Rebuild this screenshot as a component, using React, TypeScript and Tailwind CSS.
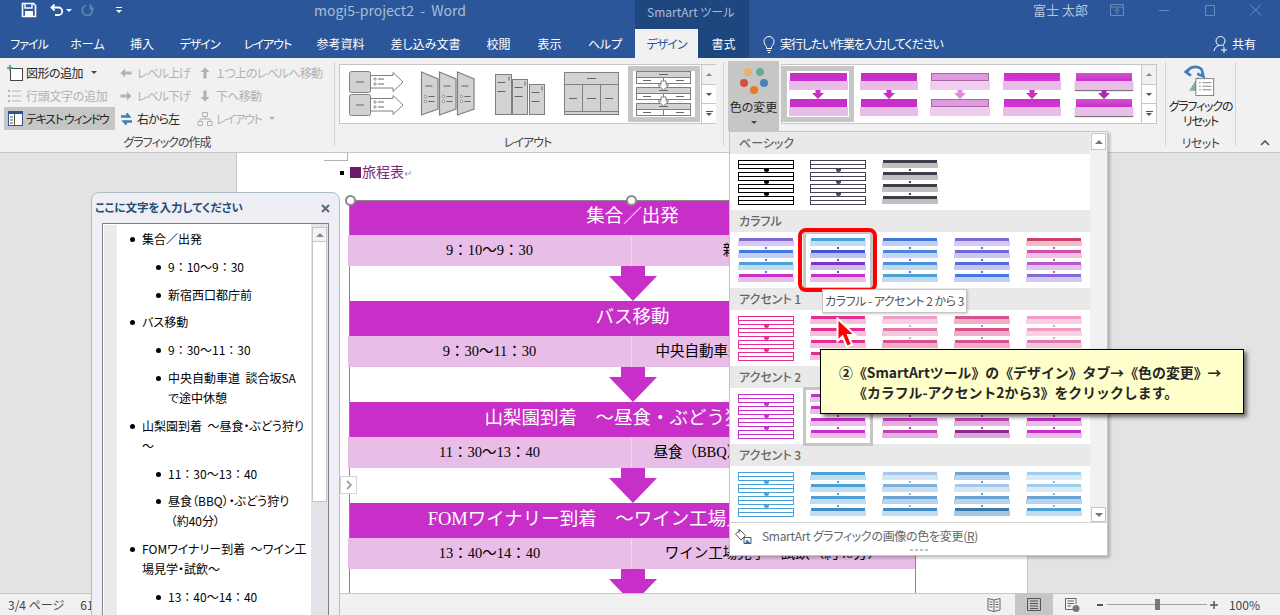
import React from "react";

type Pair = { b: string; s: string };
const purple: Pair = { b: "bg-[#8469d6]", s: "bg-[#d3c9f2]" };
const blue: Pair = { b: "bg-[#4476e0]", s: "bg-[#c2cff4]" };
const sky: Pair = { b: "bg-[#4ba0da]", s: "bg-[#bfdcf0]" };
const mag: Pair = { b: "bg-[#c82ec8]", s: "bg-[#e8bde8]" };
const indigo: Pair = { b: "bg-[#4455d8]", s: "bg-[#bcc2ef]" };
const violet: Pair = { b: "bg-[#7b35cc]", s: "bg-[#cfbce9]" };
const crimson: Pair = { b: "bg-[#d0406e]", s: "bg-[#eebccb]" };
const rose: Pair = { b: "bg-[#d050b0]", s: "bg-[#efc0e2]" };
const orchid: Pair = { b: "bg-[#b858d0]", s: "bg-[#e2c3ee]" };
const mid1: Pair = { b: "bg-[#4a86e0]", s: "bg-[#c3d6f3]" };
const mid2: Pair = { b: "bg-[#4a90dc]", s: "bg-[#bfd8f2]" };
const per1: Pair = { b: "bg-[#6d67dc]", s: "bg-[#c9c7f2]" };
const per2: Pair = { b: "bg-[#5a6ae0]", s: "bg-[#c3c8f3]" };
const dark: Pair = { b: "bg-[#3e3e4a]", s: "bg-[#c0c0c0]" };
const pk: Pair = { b: "bg-[#e32d91]", s: "bg-[#f5c0dc]" };
const pk1: Pair = { b: "bg-[#ee9cc4]", s: "bg-[#f6d0e4]" };
const pk2: Pair = { b: "bg-[#e478ac]", s: "bg-[#f4c8dc]" };
const pk3: Pair = { b: "bg-[#d85090]", s: "bg-[#f0aec8]" };
const pk4: Pair = { b: "bg-[#f39ac6]", s: "bg-[#f9d0e4]" };
const mg1: Pair = { b: "bg-[#dd88dd]", s: "bg-[#f0d0f0]" };
const mg2: Pair = { b: "bg-[#c040b8]", s: "bg-[#e4b0e0]" };
const mg3: Pair = { b: "bg-[#8a2a8a]", s: "bg-[#d8a8d8]" };
const sk1: Pair = { b: "bg-[#a5c8e8]", s: "bg-[#d4e6f4]" };
const sk2: Pair = { b: "bg-[#7fb0dc]", s: "bg-[#c8def0]" };
const sk3: Pair = { b: "bg-[#6aa4d4]", s: "bg-[#b8d4ec]" };
const sk4: Pair = { b: "bg-[#3a78a4]", s: "bg-[#a4c8e4]" };
const sk5: Pair = { b: "bg-[#9fcdec]", s: "bg-[#d8ebf6]" };
const sk6: Pair = { b: "bg-[#3f8cc8]", s: "bg-[#bfdcf0]" };

function Swatch({ rows, dot }: { rows: Pair[]; dot: string }) {
  return (
    <div className="w-[56px] h-[45px] flex flex-col">
      {rows.map((r, i) => (
        <React.Fragment key={i}>
          <div className={`h-[3px] mx-px shrink-0 ${r.b}`} />
          <div className={`h-[5px] shrink-0 ${r.s}`} />
          {i < 3 && (
            <div className="h-[4px] flex items-center justify-center shrink-0">
              <div className={`w-[2px] h-[2px] ${dot}`} />
            </div>
          )}
        </React.Fragment>
      ))}
    </div>
  );
}

function Outline({ line, dot }: { line: string; dot: string }) {
  return (
    <div className="w-[56px] h-[45px] flex flex-col">
      {[0, 1, 2, 3].map((i) => (
        <React.Fragment key={i}>
          <div className={`h-[9px] shrink-0 border bg-white flex flex-col justify-center ${line}`}>
            <div className={`h-px border-t ${line}`} />
          </div>
          {i < 3 && (
            <div className="h-[3px] flex justify-center shrink-0">
              <div className={`w-[5px] h-[3px] rounded-b-full ${dot}`} />
            </div>
          )}
        </React.Fragment>
      ))}
    </div>
  );
}

function SectionHead({ children }: { children: React.ReactNode }) {
  return (
    <div className="h-[22px] bg-[#e9e9e9] pl-[9px] flex items-center text-[12px] font-medium text-[#666666]">
      {children}
    </div>
  );
}

function Grid({ children }: { children: React.ReactNode }) {
  return <div className="h-[56px] pt-[6px] px-[8px] grid grid-cols-5 gap-x-[16px] items-start">{children}</div>;
}

function Selected({ children }: { children: React.ReactNode }) {
  return <div className="outline-[3px] outline-solid outline-offset-[4px] outline-[#c6c6c6]">{children}</div>;
}

function Ribbon1Item({ icon, label, dim, caret, active, track }: { icon: React.ReactNode; label: string; dim?: boolean; caret?: boolean; active?: boolean; track: string }) {
  return (
    <div className={`h-[23px] flex items-center whitespace-nowrap text-[12px] ${dim ? "text-[#b1b1b1]" : "text-[#262626]"} ${active ? "bg-[#c6c6c6]" : ""}`}>
      <div className="w-[22px] h-[18px] flex items-center justify-center shrink-0">{icon}</div>
      <span className={track}>{label}</span>
      {caret && <span className={`ml-[8px] w-0 h-0 border-x-[3px] border-x-transparent border-t-[3px] ${dim ? "border-t-[#b1b1b1]" : "border-t-[#444444]"}`} />}
    </div>
  );
}

function ScrollCol() {
  const caret = "w-0 h-0 border-x-[3px] border-x-transparent";
  return (
    <div className="w-[15px] flex flex-col border-l border-[#c6c6c6] bg-white shrink-0">
      <div className="flex-1 flex items-center justify-center border-b border-[#c6c6c6] bg-[#f1f1f1]">
        <div className={`${caret} border-b-[3px] border-b-[#8a8a8a]`} />
      </div>
      <div className="flex-1 flex items-center justify-center border-b border-[#c6c6c6]">
        <div className={`${caret} border-t-[3px] border-t-[#555555]`} />
      </div>
      <div className="flex-1 flex flex-col items-center justify-center gap-px">
        <div className="w-[7px] h-px bg-[#555555]" />
        <div className={`${caret} border-t-[3px] border-t-[#555555]`} />
      </div>
    </div>
  );
}

function MiniThumb({ w, top, sub, arrow, frame, shadow }: { w: string; top: string; sub: string; arrow: string; frame?: boolean; shadow?: boolean }) {
  return (
    <div className={`${w} h-[43px] flex flex-col shrink-0`}>
      <div className={`h-[8px] mx-px ${top} ${frame ? "border border-[#a868a8]" : ""}`} />
      <div className={`h-[9px] ${sub} ${shadow ? "shadow-[0_1px_1px_#777777]" : ""}`} />
      <div className="h-[9px] flex justify-center">
        <svg width="12" height="9" viewBox="0 0 12 9"><path d={"M3.5 0H8.5V3H12L6 9L0 3H3.5Z"} fill={arrow} /></svg>
      </div>
      <div className={`h-[8px] mx-px ${top} ${frame ? "border border-[#a868a8]" : ""}`} />
      <div className={`h-[9px] ${sub} ${shadow ? "shadow-[0_1px_1px_#777777]" : ""}`} />
    </div>
  );
}

const G = "#d2d2d2";
const S = "#808080";

function LayoutGallery() {
  return (
    <div className="w-[377px] h-[60px] mt-[3px] border border-[#c6c6c6] bg-white flex relative">
      <svg width="361" height="58" viewBox="340 65 361 58" className="shrink-0">
        {[71.5, 94.5].map((y) => (
          <g key={y}>
            <rect x="349.5" y={y} width="21" height="21" rx="2" fill={G} stroke={S} />
            <path d={`M356 ${y + 10.5}H364`} stroke="#666" />
            <path d={`M371 ${y + 4}H393V${y + 1}L403 ${y + 10.5}L393 ${y + 20}V${y + 16.5}H371`} fill="#fff" stroke={S} />
            <circle cx="375" cy={y + 7.5} r="1.2" fill="#fff" stroke="#666" strokeWidth=".7" />
            <circle cx="375" cy={y + 12.5} r="1.2" fill="#fff" stroke="#666" strokeWidth=".7" />
            <path d={`M378 ${y + 7.5}H384M378 ${y + 12.5}H384`} stroke="#666" />
          </g>
        ))}
        {[421.5, 439.5, 457.5].map((x) => (
          <g key={x}>
            <path d={`M${x} 72L${x + 16.5} 79V109L${x} 115Z`} fill={G} stroke={S} strokeWidth="1.2" />
            <path d={`M${x + 4} 86H${x + 11}`} stroke="#666" />
            <circle cx={x + 4} cy="96.5" r="1.2" fill="#fff" stroke="#666" strokeWidth=".7" />
            <circle cx={x + 4} cy="101.5" r="1.2" fill="#fff" stroke="#666" strokeWidth=".7" />
            <path d={`M${x + 7} 96.5H${x + 13}M${x + 7} 101.5H${x + 13}`} stroke="#666" />
          </g>
        ))}
        {[[495.5, 74.5, 16, 40], [512.5, 79.5, 15, 35], [529.5, 84.5, 15, 30]].map(([x, y, w, h]) => (
          <g key={x}>
            <rect x={x} y={y} width={w} height={h} fill={G} stroke={S} />
            <path d={`M${x + w - 2.5} ${y + 2}V${y + 6}`} stroke="#666" />
            <path d={`M${x + 2} ${y + 8}H${x + 10}M${x + 2} ${y + 17}H${x + 10}`} stroke="#666" />
          </g>
        ))}
        <rect x="564.5" y="72.5" width="54" height="42" fill={G} stroke={S} />
        <path d="M564.5 84.5H618.5M564.5 111.5H618.5M582.5 84.5V111.5M600.5 84.5V111.5" stroke={S} fill="none" />
        <path d="M587 78.5H596M569 98.5H577M587 98.5H596M605 98.5H613" stroke="#666" />
        <rect x="630.5" y="68.5" width="67" height="51" fill="#fff" stroke="#c6c6c6" strokeWidth="5" />
        {[71.5, 87.5, 103.5].map((y) => (
          <g key={y}>
            <rect x="636.5" y={y} width="54" height="12" fill="#fff" stroke={S} />
            <rect x="636.5" y={y} width="54" height="6" fill={G} stroke={S} />
            <path d={`M663.5 ${y + 6}V${y + 12}`} stroke={S} />
            <path d={`M659 ${y + 3}H668M643 ${y + 9}H651M676 ${y + 9}H684`} stroke="#666" />
          </g>
        ))}
        {[81, 97].map((y) => (
          <path key={y} d={`M661 ${y}H666V${y + 4}H669L663.5 ${y + 9}L658 ${y + 4}H661Z`} fill="#fff" stroke={S} />
        ))}
      </svg>
      <div className="flex-1" />
      <ScrollCol />
    </div>
  );
}

function Dots() {
  return (
    <svg width="30" height="30" viewBox="0 0 30 30" className="shrink-0">
      <circle cx="9" cy="5" r="4" fill="#eab06e" />
      <circle cx="21" cy="5" r="4" fill="#6daa92" />
      <circle cx="5" cy="16" r="4" fill="#d4503a" />
      <circle cx="25" cy="16" r="4" fill="#4a80b8" />
      <circle cx="15" cy="23" r="4" fill="#e87a20" />
    </svg>
  );
}

function ArrowDown() {
  return (
    <div className="h-[35px] flex justify-center">
      <svg width="48" height="35" viewBox="0 0 48 35"><path d="M12 0H36V10H48L24 35L0 10H12Z" fill="#c82ec8" /></svg>
    </div>
  );
}

function Block({ title, left, right, first }: { title: string; left: string; right: string; first?: boolean }) {
  return (
    <>
      <div className={`h-[35px] pb-[2px] bg-[#c82ec8] text-white text-[18.500px] flex items-center justify-center whitespace-nowrap ${first ? "border-t border-[#888888]" : ""}`}>
        {title}
      </div>
      <div className="h-[31px] -ml-[2px] flex bg-[#e8bde8] text-[14.500px] text-black whitespace-nowrap">
        <div className="w-[284px] flex items-center justify-center border-r border-[#f0d8f0]">{left}</div>
        <div className="flex-1 flex items-center justify-center">{right}</div>
      </div>
    </>
  );
}

function Li({ lvl, mono, children }: { lvl: 1 | 2; mono?: boolean; children: React.ReactNode }) {
  return (
    <div className={`flex items-start ${lvl === 1 ? "pl-[12px]" : "pl-[38px]"}`}>
      <div className="w-[5px] h-[5px] rounded-full bg-black mt-[8px] shrink-0" />
      <div className={`ml-[7px] leading-[20px] whitespace-nowrap ${mono ? "[font-feature-settings:normal]" : ""}`}>{children}</div>
    </div>
  );
}

export default function App() {
  const dimArrow = "#b1b1b1";
  return (
    <div className="relative w-[1280px] h-[615px] overflow-hidden flex flex-col bg-[#e3e3e3] font-['Noto_Sans_CJK_JP','Noto_Sans',sans-serif] [font-feature-settings:'palt'] text-[#262626]">
      {/* title bar */}
      <div className="h-[29px] pb-[9px] bg-[#2b579a] flex items-center text-[12px] relative shrink-0">
        <svg width="16" height="16" viewBox="0 0 16 16" className="ml-[21px]">
          <path d="M1.5 1.5H12.5L14.5 3.5V14.5H1.5Z" fill="none" stroke="#fff" strokeWidth="1.6" />
          <path d="M4 2V6H11V2" fill="none" stroke="#fff" strokeWidth="1.4" />
          <rect x="4" y="9" width="8" height="5.5" fill="#fff" />
        </svg>
        <svg width="14" height="14" viewBox="0 0 14 14" className="ml-[13px]">
          <path d="M4.5 1.5L1.5 4.5L4.5 7.5M2 4.5H8.5A3.7 3.7 0 0 1 8.5 12H5" fill="none" stroke="#fff" strokeWidth="1.8" />
        </svg>
        <span className="ml-[2px] w-0 h-0 border-x-[3px] border-x-transparent border-t-[3px] border-t-white" />
        <svg width="14" height="14" viewBox="0 0 14 14" className="ml-[9px]">
          <path d="M9.5 1.5V5.5H13M9.5 3.5A5 5 0 1 1 5 2.5" fill="none" stroke="#5f82b6" strokeWidth="1.8" />
        </svg>
        <div className="ml-[21px] flex flex-col gap-[2px] items-center w-[6px]">
          <div className="w-[6px] h-px bg-white" />
          <div className="w-0 h-0 border-x-[3px] border-x-transparent border-t-[3px] border-t-white" />
        </div>
        <span className="ml-[192px] w-[139px] text-[#a9bcd8] text-[14px] whitespace-nowrap">mogi5-project2&nbsp;&nbsp;-&nbsp;&nbsp;Word</span>
        <div className="ml-[182px] w-[114px] h-[29px] self-start bg-[#1f477f] text-[#a9bcd8] flex items-center pl-[12px] pb-[5px] text-[12px] whitespace-nowrap">SmartArt ツール</div>
        <span className="ml-[284px] text-[#b4c4dc] text-[13px] whitespace-nowrap">富士 太郎</span>
        <svg width="160" height="16" viewBox="0 0 160 16" className="ml-[21px] shrink-0">
          <path d="M1.5 2.5H14.5V13.5H1.5ZM1.5 5H14.5M8 12V7M5.5 9L8 6.5L10.5 9" fill="none" stroke="#6f8cb8" />
          <path d="M50 8.5H60" stroke="#6f8cb8" />
          <path d="M96.5 3.5H105.5V13.5H96.5Z" fill="none" stroke="#6f8cb8" />
          <path d="M141 2.5L152 13.5M152 2.5L141 13.5" stroke="#6f8cb8" />
        </svg>
      </div>
      {/* tabs */}
      <div className="h-[29px] bg-[#2b579a] flex text-[12px] text-white shrink-0">
        <div className="w-[58px] flex items-center justify-center tracking-[-1px]">ファイル</div>
        <div className="w-[59px] flex items-center justify-center">ホーム</div>
        <div className="w-[50px] flex items-center justify-center">挿入</div>
        <div className="w-[65px] flex items-center justify-center tracking-[-1px]">デザイン</div>
        <div className="w-[71px] flex items-center justify-center tracking-[-1px]">レイアウト</div>
        <div className="w-[75px] flex items-center justify-center">参考資料</div>
        <div className="w-[95px] flex items-center justify-center">差し込み文書</div>
        <div className="w-[51px] flex items-center justify-center">校閲</div>
        <div className="w-[51px] flex items-center justify-center">表示</div>
        <div className="w-[60px] flex items-center justify-center">ヘルプ</div>
        <div className="w-[63px] flex items-center justify-center bg-[#f1f1f1] text-[#2b579a] tracking-[-1px]">デザイン</div>
        <div className="w-[51px] flex items-center justify-center bg-[#1f477f]">書式</div>
        <svg width="14" height="18" viewBox="0 0 14 18" className="ml-[13px] self-center shrink-0">
          <path d="M4.5 11.5C3 10 2 8.5 2 6.5A5 5 0 0 1 12 6.5C12 8.5 11 10 9.5 11.5V13.5H4.5ZM5 15.5H9M6 17.5H8" fill="none" stroke="#fff" />
        </svg>
        <span className="ml-[4px] self-center whitespace-nowrap tracking-[-1px]">実行したい作業を入力してください</span>
        <div className="ml-auto mr-[24px] flex items-center gap-[3px]">
          <svg width="16" height="18" viewBox="0 0 16 18">
            <circle cx="7.5" cy="6" r="4.5" fill="none" stroke="#fff" />
            <path d="M1 16C1.5 13 3.5 11 6 10.5M10 10.5L11 11M11 12V18M8 15H14" fill="none" stroke="#fff" />
          </svg>
          <span>共有</span>
        </div>
      </div>
      {/* ribbon */}
      <div className="h-[94px] bg-[#f1f1f1] flex shrink-0 pt-[3px] text-[12px]">
        <div className="w-[334px] flex flex-col shrink-0">
          <div className="h-[69px] flex">
            <div className="w-[111px] ml-[4px] flex flex-col">
              <Ribbon1Item
                label="図形の追加"
                track="tracking-[-0.5px]"
                caret
                icon={
                  <svg width="16" height="16" viewBox="0 0 16 16">
                    <rect x="3.5" y="3.5" width="12" height="12" fill="#fff" stroke="#444" />
                    <path d="M0 3H6M3 0V6" stroke="#3c9a6c" strokeWidth="1.6" />
                  </svg>
                }
              />
              <Ribbon1Item
                label="行頭文字の追加"
                track="tracking-[-0.3px]"
                dim
                icon={
                  <svg width="14" height="14" viewBox="0 0 14 14">
                    <path d="M4 2H13M4 7H13M4 12H13" stroke="#b1b1b1" />
                    <rect x="0" y="1" width="2" height="2" fill="#b1b1b1" />
                    <rect x="0" y="6" width="2" height="2" fill="#b1b1b1" />
                    <rect x="0" y="11" width="2" height="2" fill="#b1b1b1" />
                  </svg>
                }
              />
              <Ribbon1Item
                label="テキスト ウィンドウ"
                track="tracking-[-1.3px]"
                active
                icon={
                  <svg width="15" height="15" viewBox="0 0 15 15">
                    <rect x=".5" y=".5" width="14" height="14" fill="#fff" stroke="#2b579a" />
                    <rect x="0" y="0" width="15" height="3" fill="#2b579a" />
                    <path d="M6.5 3V14M2 6H5M2 9H5M2 12H5" stroke="#555" />
                  </svg>
                }
              />
            </div>
            <div className="w-[79px] flex flex-col">
              <Ribbon1Item label="レベル上げ" track="tracking-[-1px]" dim icon={<svg width="12" height="10" viewBox="0 0 12 10"><path d="M5 0.5L0.5 5L5 9.500V6.500H11.500V3.500H5Z" fill={dimArrow} /></svg>} />
              <Ribbon1Item label="レベル下げ" track="tracking-[-1px]" dim icon={<svg width="12" height="10" viewBox="0 0 12 10"><path d="M7 0.5L11.500 5L7 9.500V6.500H0.5V3.500H7Z" fill={dimArrow} /></svg>} />
              <Ribbon1Item
                label="右から左"
                track="tracking-[-1px]"
                icon={
                  <svg width="15" height="16" viewBox="0 0 15 16">
                    <path d="M2 5.500H10L7.500 2.500M13 10.500H5L7.500 13.500" fill="none" stroke="#3f7fb8" strokeWidth="2.400" />
                  </svg>
                }
              />
            </div>
            <div className="flex flex-col">
              <Ribbon1Item label="１つ上のレベルへ移動" track="tracking-[-0.8px]" dim icon={<svg width="10" height="12" viewBox="0 0 10 12"><path d="M5 0.5L9.500 5H6.500V11.500H3.500V5H0.5Z" fill={dimArrow} /></svg>} />
              <Ribbon1Item label="下へ移動" track="tracking-[-0.7px]" dim icon={<svg width="10" height="12" viewBox="0 0 10 12"><path d="M5 11.500L9.500 7H6.500V0.5H3.500V7H0.5Z" fill={dimArrow} /></svg>} />
              <Ribbon1Item
                label="レイアウト"
                track="tracking-[-1.4px]"
                dim
                caret
                icon={
                  <svg width="16" height="16" viewBox="0 0 16 16">
                    <path d="M5.500 1.500H10.500V5.500H5.500ZM8 5.500V8M3 10.500V8H13V10.500M1 10.500H5.500V14.500H1ZM10.500 10.500H15V14.500H10.500Z" fill="none" stroke="#b1b1b1" />
                  </svg>
                }
              />
            </div>
          </div>
          <div className="h-[22px] pt-[2px] flex items-center justify-center text-[#444444] tracking-[-1px]">グラフィックの作成</div>
        </div>
        <div className="w-px h-[84px] mt-px bg-[#d4d4d4] shrink-0" />
        <div className="w-[388px] flex flex-col items-start pl-[4px] shrink-0">
          <LayoutGallery />
          <div className="w-[377px] h-[28px] pt-[7px] flex items-center justify-center text-[#444444] tracking-[-1px]">レイアウト</div>
        </div>
        <div className="w-px h-[84px] mt-px bg-[#d4d4d4] shrink-0" />
        <div className="w-[51px] h-[70px] ml-[4px] bg-[#c6c6c6] flex flex-col items-center pt-[6px] shrink-0">
          <Dots />
          <span className="mt-[1px] whitespace-nowrap">色の変更</span>
          <span className="mt-[5px] w-0 h-0 border-x-[3px] border-x-transparent border-t-[3px] border-t-[#444444]" />
        </div>
        <div className="w-[376px] h-[60px] mt-[3px] ml-[2px] border border-[#c6c6c6] bg-white flex shrink-0">
          <div className="w-[72px] h-[56px] my-px border-[5px] border-[#c6c6c6] flex items-center justify-center shrink-0 bg-white">
            <MiniThumb w="w-[59px]" top="bg-[#c82ec8]" sub="bg-[#e8bde8]" arrow="#c82ec8" />
          </div>
          <div className="ml-[6px] self-center"><MiniThumb w="w-[58px]" top="bg-[#c82ec8]" sub="bg-[#e8bde8]" arrow="#c82ec8" /></div>
          <div className="ml-[12px] self-center"><MiniThumb w="w-[60px]" top="bg-[#e09ae0]" sub="bg-[#efcdef]" arrow="#e08ae0" frame /></div>
          <div className="ml-[13px] self-center"><MiniThumb w="w-[58px]" top="bg-gradient-to-b from-[#c82ec8] to-[#d636d6]" sub="bg-[#e8bde8]" arrow="#c82ec8" /></div>
          <div className="ml-[14px] self-center"><MiniThumb w="w-[58px]" top="bg-gradient-to-b from-[#d050d0] to-[#c82ec8]" sub="bg-[#e8bde8]" arrow="#b02ab0" shadow /></div>
          <div className="flex-1" />
          <ScrollCol />
        </div>
        <div className="w-px h-[84px] mt-px ml-[8px] bg-[#d4d4d4] shrink-0" />
        <div className="w-[69px] flex flex-col items-center shrink-0">
          <svg width="34" height="36" viewBox="0 0 34 36" className="mt-[3px] -ml-[3px]">
            <path d="M6 30L16 14L26 30Z" fill="#7fb09c" />
            <rect x="13.500" y="16.500" width="20" height="19" fill="#fff" stroke="#777" />
            <path d="M17 21H19M21 21H31M17 25H19M21 25H31M17 29H19M21 29H31" stroke="#777" />
            <path d="M4 9A9 7 0 0 1 20 6L22 14L15 11M8 4L2 9L8 13" fill="none" stroke="#3f7fb8" strokeWidth="3" />
          </svg>
          <div className="mt-[2px] text-center leading-[15px] whitespace-nowrap tracking-[-1.2px]">グラフィックの<br />リセット</div>
          <div className="mt-[6px] text-[#444444] tracking-[-0.5px]">リセット</div>
        </div>
        <div className="w-px h-[84px] mt-px bg-[#d4d4d4] shrink-0" />
        <div className="flex-1 relative">
          <svg width="10" height="6" viewBox="0 0 10 6" className="absolute right-[10px] bottom-[6px]"><path d="M1 5L5 1L9 5" fill="none" stroke="#555" strokeWidth="1.600" /></svg>
        </div>
      </div>
      {/* main */}
      <div className="flex-1 min-h-0 overflow-hidden border-t border-[#c6c6c6] bg-[#e3e3e3]">
        <div className="w-[792px] h-full ml-[236px] bg-white border-x border-[#c6c6c6]">
          <div className="w-[111px] h-[8px] flex justify-end">
            <div className="w-[24px] h-[8px] border-r border-b border-[#b0b0b0]" />
          </div>
          <div className="h-[39px] pb-[16px] pl-[103px] flex items-center gap-[6px] text-[#7a2a7a] font-['Liberation_Serif','Noto_Sans_CJK_JP',serif] whitespace-nowrap">
            <div className="w-[4px] h-[4px] bg-black" />
            <div className="w-[11px] h-[11px] bg-[#6b1a6b]" />
            <span className="-ml-[5px] text-[14px]">旅程表<span className="text-[#999999] text-[10px]">↵</span></span>
          </div>
          <div className="ml-[112px] w-[567px] border-l border-r border-[#888888] font-['Liberation_Serif','Noto_Sans_CJK_JP',serif] [font-feature-settings:normal]">
            <Block first title="集合／出発" left="9：10～9：30" right="新宿西口都庁前" />
            <ArrowDown />
            <Block title="バス移動" left="9：30～11：30" right="中央自動車道　談合坂SAで途中休憩" />
            <ArrowDown />
            <Block title="山梨園到着　～昼食・ぶどう狩り～" left="11：30～13：40" right="昼食（BBQ）・ぶどう狩り（約40分）" />
            <ArrowDown />
            <Block title="FOMワイナリー到着　～ワイン工場見学・試飲～" left="13：40～14：40" right="ワイン工場見学・試飲（約40分）" />
            <ArrowDown />
          </div>
        </div>
      </div>
      {/* status */}
      <div className="h-[22px] bg-[#f1f1f1] border-t border-[#c6c6c6] flex items-center text-[12px] text-[#444444] shrink-0">
        <span className="ml-[8px] whitespace-nowrap">3/4 ページ</span>
        <span className="ml-[16px] whitespace-nowrap">615 文字</span>
        <div className="ml-auto flex items-center h-full">
          <svg width="14" height="14" viewBox="0 0 14 14" className="mr-[14px]">
            <path d="M7 2L1 .5V12L7 13.500L13 12V.5ZM7 2V13.500M2.500 4H5.500M2.500 6.500H5.500M2.500 9H5.500M8.500 4H11.500M8.500 6.500H11.500M8.500 9H11.500" fill="none" stroke="#666" />
          </svg>
          <div className="w-[38px] h-full bg-[#c6c6c6] flex items-center justify-center">
            <svg width="14" height="13" viewBox="0 0 14 13"><path d="M.5 .5H13.500V12.500H.5ZM3 3H11M3 5.500H11M3 8H11M3 10.500H11" fill="none" stroke="#555" /></svg>
          </div>
          <svg width="15" height="14" viewBox="0 0 15 14" className="ml-[12px]">
            <path d="M9 11.500H.5V.5H11V6M2.500 3H9M2.500 5.500H9M2.500 8H6" fill="none" stroke="#666" />
            <circle cx="11" cy="10.500" r="3.500" fill="#777" />
          </svg>
          <div className="ml-[17px] w-[6px] h-[2px] bg-[#555555]" />
          <div className="ml-[4px] w-[100px] h-px bg-[#a0a0a0] relative">
            <div className="absolute left-[48px] -top-[5px] w-[5px] h-[11px] bg-[#777777]" />
          </div>
          <svg width="8" height="8" viewBox="0 0 8 8" className="ml-[3px]"><path d="M0 4H8M4 0V8" stroke="#555" strokeWidth="1.500" /></svg>
          <span className="ml-[11px] mr-[20px] whitespace-nowrap">100%</span>
        </div>
      </div>

      {/* selection handles on the diagram */}
      <div className="absolute left-[345px] top-[195px] w-[11px] h-[11px] rounded-full bg-white border-2 border-[#8a8a8a]" />
      <div className="absolute left-[626px] top-[195px] w-[11px] h-[11px] rounded-full bg-white border-2 border-[#8a8a8a]" />
      <div className="absolute left-[340px] top-[476px] w-[17px] h-[18px] bg-white border border-[#d4d4d4] flex items-center justify-center">
        <svg width="6" height="10" viewBox="0 0 6 10"><path d="M1 1L5 5L1 9" fill="none" stroke="#a0a0a0" strokeWidth="1.800" /></svg>
      </div>

      {/* text pane */}
      <div className="absolute left-[91px] top-[192px] w-[249px] h-[430px] bg-[#eeeef4] border border-[#aebfc8] rounded-t-[8px] flex flex-col">
        <div className="h-[30px] flex items-center justify-between pl-[3px] pr-[9px] shrink-0">
          <span className="text-[11.500px] font-bold text-[#1f4e79] whitespace-nowrap">ここに文字を入力してください</span>
          <svg width="9" height="9" viewBox="0 0 9 9"><path d="M1 1L8 8M8 1L1 8" stroke="#5c6670" strokeWidth="2" /></svg>
        </div>
        <div className="mx-[10px] flex-1 min-h-0 border border-[#808080] bg-white flex overflow-hidden">
          <div className="w-[13px] bg-[#ebebeb] m-px shrink-0" />
          <div className="flex-1 flex flex-col gap-[7.800px] pt-[5px] text-[12px] text-black">
            <Li lvl={1}>集合／出発</Li>
            <Li lvl={2} mono>9：10～9：30</Li>
            <Li lvl={2} mono>新宿西口都庁前</Li>
            <Li lvl={1}>バス移動</Li>
            <Li lvl={2} mono>9：30～11：30</Li>
            <Li lvl={2}>中央自動車道&nbsp; 談合坂SA<br />で途中休憩</Li>
            <Li lvl={1}>山梨園到着&nbsp; ～昼食・ぶどう狩り<br />～</Li>
            <Li lvl={2} mono>11：30～13：40</Li>
            <Li lvl={2}>昼食（BBQ）・ぶどう狩り<br />&nbsp;（約40分）</Li>
            <Li lvl={1}>FOMワイナリー到着&nbsp; ～ワイン工<br />場見学・試飲～</Li>
            <Li lvl={2} mono>13：40～14：40</Li>
          </div>
          <div className="w-[17px] bg-[#e3e3e9] pt-[3px] px-px shrink-0 flex flex-col">
            <div className="h-[15px] bg-[#f4f4f4] border border-[#c6c6c6] flex items-center justify-center">
              <div className="w-0 h-0 border-x-[4px] border-x-transparent border-b-[4px] border-b-[#8a8a8a]" />
            </div>
            <div className="h-[260px] bg-white border border-[#c6c6c6] border-t-0" />
          </div>
        </div>
      </div>

      {/* colour gallery menu */}
      <div className="absolute left-[729px] top-[131px] w-[379px] h-[425px] bg-white border border-[#c6c6c6] shadow-[2px_2px_3px_rgba(0,0,0,0.25)] flex flex-col">
        <div className="h-[390px] flex shrink-0">
          <div className="w-[360px] shrink-0">
            <SectionHead>ベーシック</SectionHead>
            <Grid>
              <Outline line="border-black" dot="bg-black" />
              <Outline line="border-[#444455]" dot="bg-[#444455]" />
              <Swatch rows={[dark, dark, dark, dark]} dot="bg-[#3e3e4a]" />
            </Grid>
            <SectionHead>カラフル</SectionHead>
            <Grid>
              <Swatch rows={[purple, blue, sky, mag]} dot="bg-[#5a6ae0]" />
              <Selected><Swatch rows={[sky, indigo, violet, mag]} dot="bg-[#4455d8]" /></Selected>
              <Swatch rows={[blue, mid1, mid2, sky]} dot="bg-[#4476e0]" />
              <Swatch rows={[purple, per1, per2, blue]} dot="bg-[#5a6ae0]" />
              <Swatch rows={[crimson, rose, orchid, purple]} dot="bg-[#d050b0]" />
            </Grid>
            <SectionHead>アクセント 1</SectionHead>
            <Grid>
              <Outline line="border-[#e32d91]" dot="bg-[#e32d91]" />
              <Swatch rows={[pk, pk, pk, pk]} dot="bg-[#e32d91]" />
              <Swatch rows={[pk1, pk2, pk3, pk2]} dot="bg-[#ee9cc4]" />
              <Swatch rows={[pk3, pk3, pk3, pk3]} dot="bg-[#e478ac]" />
              <Swatch rows={[pk4, pk4, pk2, pk2]} dot="bg-[#f39ac6]" />
            </Grid>
            <SectionHead>アクセント 2</SectionHead>
            <Grid>
              <Outline line="border-[#c82ec8]" dot="bg-[#c82ec8]" />
              <Selected><Swatch rows={[mag, mag, mag, mag]} dot="bg-[#c82ec8]" /></Selected>
              <Swatch rows={[mg1, mg2, mg2, mg2]} dot="bg-[#c82ec8]" />
              <Swatch rows={[mg2, mg2, mg2, mg3]} dot="bg-[#c82ec8]" />
              <Swatch rows={[mg1, mg2, mag, mag]} dot="bg-[#c82ec8]" />
            </Grid>
            <SectionHead>アクセント 3</SectionHead>
            <Grid>
              <Outline line="border-[#4ba0da]" dot="bg-[#4ba0da]" />
              <Swatch rows={[sky, sky, sky, sk6]} dot="bg-[#4ba0da]" />
              <Swatch rows={[sk1, sk2, sk3, sk6]} dot="bg-[#8cc0e8]" />
              <Swatch rows={[sk3, sk1, sk3, sk4]} dot="bg-[#4ba0da]" />
              <Swatch rows={[sk5, sk5, sk3, sky]} dot="bg-[#8cc0e8]" />
            </Grid>
          </div>
          <div className="flex-1 bg-[#f1f1f1] px-px pt-px flex flex-col justify-between">
            <div className="h-[17px] bg-white border border-[#c6c6c6] flex items-center justify-center">
              <div className="w-0 h-0 border-x-[4px] border-x-transparent border-b-[4px] border-b-[#777777]" />
            </div>
            <div className="h-[15px] bg-white border border-[#c6c6c6] flex items-center justify-center">
              <div className="w-0 h-0 border-x-[4px] border-x-transparent border-t-[4px] border-t-[#777777]" />
            </div>
          </div>
        </div>
        <div className="h-px bg-[#d4d4d4] shrink-0" />
        <div className="h-[25px] flex items-center pl-[4px] text-[12px] text-[#666666] whitespace-nowrap shrink-0">
          <svg width="18" height="16" viewBox="0 0 18 16" className="shrink-0">
            <path d="M1.500 6L6 2L11.500 7.500L7 12Z" fill="#fff" stroke="#555" />
            <path d="M5 1V5" stroke="#555" />
            <path d="M10 9.500H17V15.500H10Z" fill="#fff" stroke="#555" />
            <path d="M11 15L13 11.500L15 13.500L16 15Z" fill="#3f7fb8" />
          </svg>
          <span className="ml-[10px] tracking-[-0.3px]">SmartArt グラフィックの画像の色を変更(<span className="underline">R</span>)</span>
        </div>
        <div className="flex justify-center gap-[2px] mt-[1px]">
          <div className="w-[3px] h-[2px] bg-[#c0c0c0]" />
          <div className="w-[3px] h-[2px] bg-[#c0c0c0]" />
          <div className="w-[3px] h-[2px] bg-[#c0c0c0]" />
          <div className="w-[3px] h-[2px] bg-[#c0c0c0]" />
        </div>
      </div>

      {/* red highlight */}
      <div className="absolute left-[798px] top-[228px] w-[79px] h-[64px] border-[4px] border-[#ff0000] rounded-[8px]" />
      {/* tooltip */}
      <div className="absolute left-[822px] top-[289px] w-[145px] h-[24px] bg-white border border-[#c6c6c6] shadow-[1px_1px_2px_rgba(0,0,0,0.2)] flex items-center justify-center text-[12px] text-[#555555] whitespace-nowrap tracking-[-0.5px]">
        カラフル - アクセント 2 から 3
      </div>
      {/* cursor */}
      <svg width="22" height="34" viewBox="0 0 22 34" className="absolute left-[835px] top-[317px]">
        <path d="M2.500 1.500V24L7.500 19.500L12 30L17 27.500L13 18H20Z" fill="#ff0000" stroke="#fff" strokeWidth="2" />
      </svg>
      {/* callout */}
      <div className="absolute left-[820px] top-[349px] w-[424px] h-[65px] bg-[#ffffcc] border border-black shadow-[3px_3px_4px_rgba(0,0,0,0.55)] pl-[18px] pt-[12px] text-[13.900px] leading-[20px] font-bold text-[#262626] whitespace-nowrap [font-feature-settings:normal]">
        <div>②《SmartArtツール》の《デザイン》タブ→《色の変更》→</div>
        <div className="pl-[14px]">《カラフル-アクセント2から3》をクリックします。</div>
      </div>
    </div>
  );
}
